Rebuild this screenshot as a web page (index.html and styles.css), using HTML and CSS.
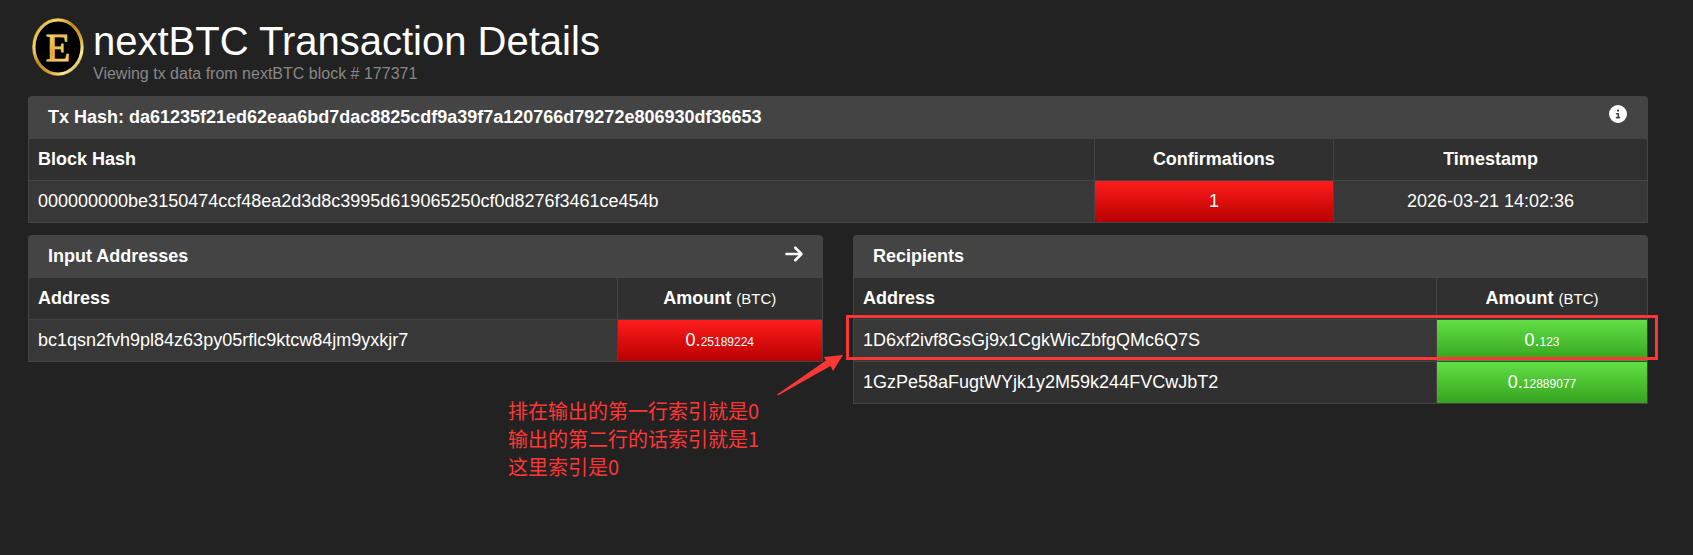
FILE: index.html
```html
<!DOCTYPE html>
<html lang="en">
  <head>
    <meta charset="UTF-8" />
    <meta name="viewport" content="width=device-width, initial-scale=1.0" />
    <title>nextBTC Transaction Details</title>
    <link rel="stylesheet" href="styles.css" />
  </head>
  <body>
    <header class="page-header">
      <svg class="logo" viewBox="0 0 54 60" aria-hidden="true">
        <defs>
          <linearGradient id="ring" x1="0" y1="0" x2="1" y2="1">
            <stop offset="0" stop-color="#d8a52c" />
            <stop offset="0.25" stop-color="#f3d56a" />
            <stop offset="0.45" stop-color="#c48a1c" />
            <stop offset="0.65" stop-color="#d9a532" />
            <stop offset="0.8" stop-color="#f8ee9a" />
            <stop offset="1" stop-color="#a8741a" />
          </linearGradient>
          <linearGradient id="letter" x1="0" y1="0" x2="1" y2="1">
            <stop offset="0" stop-color="#fff0a0" />
            <stop offset="0.25" stop-color="#f3cf60" />
            <stop offset="0.45" stop-color="#dfa035" />
            <stop offset="0.7" stop-color="#fbe88a" />
            <stop offset="1" stop-color="#e8b848" />
          </linearGradient>
        </defs>
        <ellipse cx="27" cy="30" rx="26" ry="29" fill="#6b5018" />
        <ellipse cx="27" cy="30" rx="24" ry="27" fill="#000" stroke="url(#ring)" stroke-width="3" />
        <text class="logo-letter" x="27" y="44" text-anchor="middle" fill="url(#letter)">E</text>
      </svg>
      <div>
        <h1 class="page-title">nextBTC Transaction Details</h1>
        <p class="page-subtitle">Viewing tx data from nextBTC block # 177371</p>
      </div>
    </header>

    <main>
      <section class="panel">
        <div class="panel-heading">
          <h2>Tx Hash: da61235f21ed62eaa6bd7dac8825cdf9a39f7a120766d79272e806930df36653</h2>
          <button class="icon-button" type="button" aria-label="Transaction info">
            <svg class="icon-info" viewBox="0 0 512 512">
              <path d="M256 512A256 256 0 1 0 256 0a256 256 0 1 0 0 512zM216 336h24V272H216c-13.3 0-24-10.7-24-24s10.7-24 24-24h48c13.3 0 24 10.7 24 24v88h8c13.3 0 24 10.7 24 24s-10.7 24-24 24H216c-13.3 0-24-10.7-24-24s10.7-24 24-24zm40-208a32 32 0 1 1 0 64 32 32 0 1 1 0-64z" />
            </svg>
          </button>
        </div>
        <table class="summary-table">
          <thead>
            <tr>
              <th>Block Hash</th>
              <th class="center">Confirmations</th>
              <th class="center">Timestamp</th>
            </tr>
          </thead>
          <tbody>
            <tr>
              <td>000000000be3150474ccf48ea2d3d8c3995d619065250cf0d8276f3461ce454b</td>
              <td class="center danger">1</td>
              <td class="center">2026-03-21 14:02:36</td>
            </tr>
          </tbody>
        </table>
      </section>

      <div class="columns">
        <section class="panel">
          <div class="panel-heading">
            <h2>Input Addresses</h2>
            <button class="icon-button" type="button" aria-label="Go to recipients">
              <svg class="icon-arrow" viewBox="0 0 448 512">
                <path d="M438.6 278.6c12.5-12.5 12.5-32.8 0-45.3l-160-160c-12.5-12.5-32.8-12.5-45.3 0s-12.5 32.8 0 45.3L338.8 224 32 224c-17.7 0-32 14.3-32 32s14.3 32 32 32l306.7 0L233.4 393.4c-12.5 12.5-12.5 32.8 0 45.3s32.8 12.5 45.3 0l160-160z" />
              </svg>
            </button>
          </div>
          <table class="inputs-table">
            <thead>
              <tr>
                <th>Address</th>
                <th class="center">Amount <small class="unit">(BTC)</small></th>
              </tr>
            </thead>
            <tbody>
              <tr>
                <td>bc1qsn2fvh9pl84z63py05rflc9ktcw84jm9yxkjr7</td>
                <td class="center danger">0.<span class="decimals">25189224</span></td>
              </tr>
            </tbody>
          </table>
        </section>

        <section class="panel recipients">
          <div class="panel-heading">
            <h2>Recipients</h2>
          </div>
          <table class="outputs-table">
            <thead>
              <tr>
                <th>Address</th>
                <th class="center">Amount <small class="unit">(BTC)</small></th>
              </tr>
            </thead>
            <tbody>
              <tr>
                <td>1D6xf2ivf8GsGj9x1CgkWicZbfgQMc6Q7S</td>
                <td class="center success">0.<span class="decimals">123</span></td>
              </tr>
              <tr>
                <td>1GzPe58aFugtWYjk1y2M59k244FVCwJbT2</td>
                <td class="center success">0.<span class="decimals">12889077</span></td>
              </tr>
            </tbody>
          </table>

          <!-- callout on the first output row -->
          <div class="callout-box"></div>
          <svg class="callout-arrow" viewBox="0 0 66 42" aria-hidden="true">
            <path d="M0 40.5L49 6.5L47 3L66 1L56 17L53.5 12L1 41.5Z" />
          </svg>
          <div class="callout-note" lang="zh">
            <p>排在输出的第一行索引就是0</p>
            <p>输出的第二行的话索引就是1</p>
            <p>这里索引是0</p>
          </div>
        </section>
      </div>
    </main>
  </body>
</html>
```

FILE: styles.css
```css
* {
  margin: 0;
  padding: 0;
  box-sizing: border-box;
}

body {
  min-height: 100vh;
  padding: 17px 45px 17px 28px;
  background-color: #222;
  color: #fff;
  font-family: "Liberation Sans", Arial, sans-serif;
  font-size: 18px;
  line-height: 25px;
}

/* header */

.page-header {
  display: flex;
  gap: 8px;
  padding-left: 3px;
  margin-bottom: 13px;
}

.logo {
  width: 54px;
  height: 60px;
}

.logo-letter {
  font-family: "Liberation Serif", "Times New Roman", serif;
  font-size: 40px;
  stroke: #f0c860;
  stroke-width: 1px;
}

.page-title {
  font-size: 40px;
  font-weight: normal;
  line-height: 48px;
}

.page-subtitle {
  color: #888;
  font-size: 16px;
  line-height: 18px;
}

/* panels */

.panel {
  border-radius: 4px 4px 0 0;
}

.panel-heading {
  display: flex;
  justify-content: space-between;
  align-items: flex-start;
  padding: 9px 20px;
  background-color: #444;
  border-radius: 4px 4px 0 0;
}

.panel-heading h2 {
  font-size: 18px;
  font-weight: bold;
}

.icon-button {
  display: flex;
  border: none;
  background: none;
  cursor: pointer;
}

.icon-button svg {
  fill: #fff;
}

.icon-info {
  width: 20px;
  height: 18px;
}

.icon-arrow {
  width: 18px;
  height: 20px;
}

.columns {
  display: grid;
  grid-template-columns: 1fr 1fr;
  gap: 30px;
  align-items: start;
  margin-top: 12px;
}

/* tables */

table {
  width: 100%;
  table-layout: fixed;
  border: 1px solid #444;
  border-top: none;
  border-spacing: 0;
}

th,
td {
  padding: 8px 9px;
  text-align: left;
}

th {
  background-color: #303030;
}

td {
  border-top: 1px solid #444;
  background-color: #383838;
}

th + th,
td + td {
  border-left: 1px solid #444;
}

tbody tr:nth-child(even) td {
  background-color: #303030;
}

.center {
  text-align: center;
}

tbody tr .danger {
  background: linear-gradient(#ff1c1c, #b80000) padding-box;
}

tbody tr .success {
  background: linear-gradient(#62df45, #36a31f) padding-box;
}

.unit {
  font-size: 15px;
  font-weight: normal;
  line-height: 1;
}

.decimals {
  font-size: 12px;
  line-height: 1;
}

.summary-table th:nth-child(2) {
  width: 14.8%;
}

.summary-table th:nth-child(3) {
  width: 19.4%;
}

.inputs-table th:nth-child(2) {
  width: 25.9%;
}

.outputs-table th:nth-child(2) {
  width: 26.6%;
}

/* callout */

.recipients {
  position: relative;
}

.callout-box {
  position: absolute;
  top: 80px;
  left: -7px;
  right: -10px;
  height: 45px;
  border: 3px solid #ff3636;
}

.callout-arrow {
  position: absolute;
  top: 119px;
  left: -76px;
  width: 66px;
  height: 42px;
  fill: #ff3636;
}

.callout-note {
  position: absolute;
  top: 162px;
  left: -345px;
  color: #ff3636;
  font-family: "Noto Sans CJK SC", sans-serif;
  font-size: 20px;
  line-height: 28px;
  white-space: nowrap;
}
```
